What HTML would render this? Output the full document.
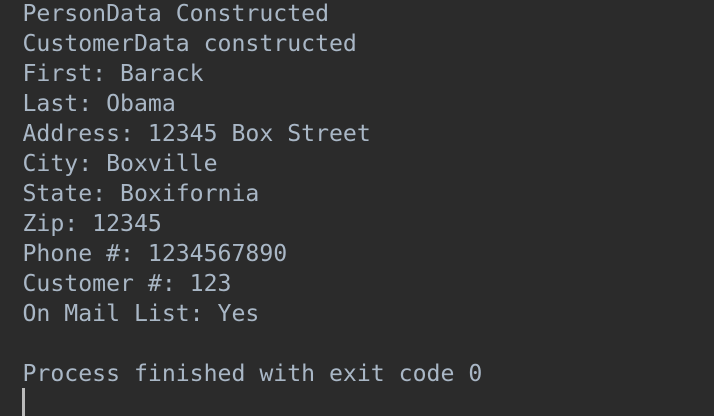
<!DOCTYPE html>
<html><head><meta charset="utf-8"><style>
html,body{margin:0;padding:0;width:714px;height:416px;overflow:hidden;background:#2b2b2b;}
pre{margin:0;position:absolute;left:22.5px;top:-1px;font-family:"DejaVu Sans Mono","Liberation Mono",monospace;font-size:23.15px;line-height:30px;color:#a9b7c6;}
.cur{position:absolute;left:22px;top:388px;width:3px;height:28px;background:#bbbbbb;}
</style></head><body>
<pre>PersonData Constructed
CustomerData constructed
First: Barack
Last: Obama
Address: 12345 Box Street
City: Boxville
State: Boxifornia
Zip: 12345
Phone #: 1234567890
Customer #: 123
On Mail List: Yes

Process finished with exit code 0</pre>
<div class="cur"></div>
</body></html>
